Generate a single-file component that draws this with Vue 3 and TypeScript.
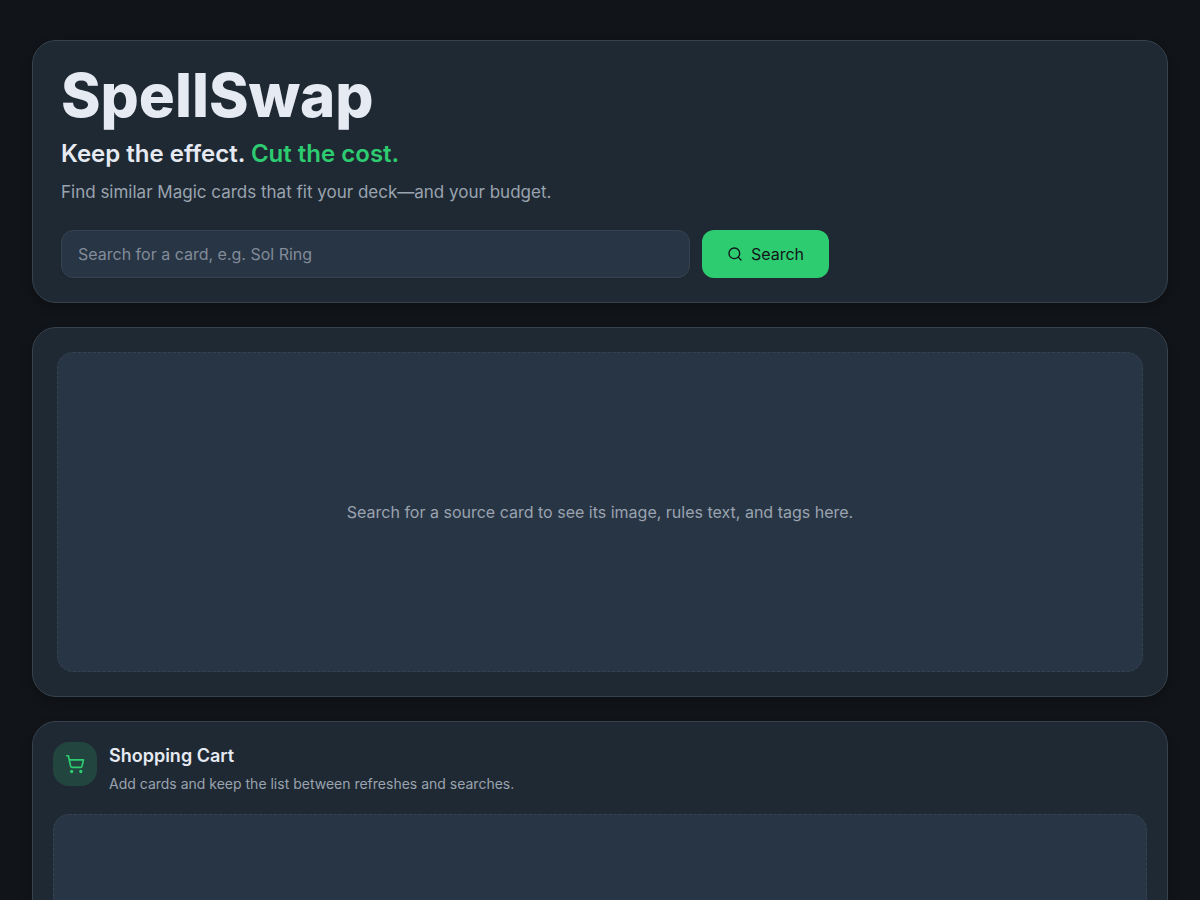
<script setup lang="ts">
import { ref } from 'vue'

const query = ref<string>('')
const cartItems = ref<string[]>([])
</script>

<template>
  <main class="page">
    <header class="panel hero">
      <h1 class="title">SpellSwap</h1>
      <p class="tagline">Keep the effect. <span class="accent">Cut the cost.</span></p>
      <p class="lead">Find similar Magic cards that fit your deck—and your budget.</p>
      <form class="search" role="search" @submit.prevent>
        <input
          v-model="query"
          class="field"
          type="text"
          aria-label="Card name"
          placeholder="Search for a card, e.g. Sol Ring"
        />
        <button class="submit" type="submit">
          <svg class="submit-icon" viewBox="0 0 24 24" aria-hidden="true">
            <circle cx="11" cy="11" r="8" />
            <path d="m21 21-4.3-4.3" />
          </svg>
          Search
        </button>
      </form>
    </header>

    <section class="panel source">
      <div class="empty source-empty">
        <p>Search for a source card to see its image, rules text, and tags here.</p>
      </div>
    </section>

    <section class="panel cart">
      <div class="cart-head">
        <span class="badge">
          <svg class="badge-icon" viewBox="0 0 24 24" aria-hidden="true">
            <circle cx="8" cy="21" r="1" />
            <circle cx="19" cy="21" r="1" />
            <path d="M2.05 2.05h2l2.66 12.42a2 2 0 0 0 2 1.58h9.78a2 2 0 0 0 1.95-1.57l1.65-7.43H5.12" />
          </svg>
        </span>
        <div>
          <h2 class="cart-title">Shopping Cart</h2>
          <p class="cart-note">Add cards and keep the list between refreshes and searches.</p>
        </div>
      </div>
      <div v-if="cartItems.length === 0" class="empty cart-empty"></div>
    </section>
  </main>
</template>

<style>
html,
body {
  background: #111418;
}
</style>

<style scoped>
.page {
  display: flex;
  flex-direction: column;
  gap: 24px;
  box-sizing: border-box;
  max-width: 1280px;
  margin: 0 auto;
  padding: 40px 32px;
  color: #e6eaf2;
  font-family: Inter, "Liberation Sans", sans-serif;
  font-size: 16px;
  line-height: 24px;
}

h1,
h2,
p {
  margin: 0;
}

.panel {
  border: 1px solid #36424f;
  border-radius: 24px;
  background: #1f2933;
  box-shadow: 0 4px 12px rgba(0, 0, 0, 0.2);
}

.hero {
  padding: 24px 28px;
}

.title {
  font-size: 60px;
  line-height: 61px;
  font-weight: 800;
}

.tagline {
  margin-top: 12px;
  font-size: 24px;
  line-height: 32px;
  font-weight: 600;
}

.accent {
  color: #2ecc71;
}

.lead {
  margin-top: 8px;
  color: #9aa3af;
  font-size: 17px;
  line-height: 28px;
}

.search {
  display: flex;
  gap: 12px;
  max-width: 768px;
  margin-top: 24px;
}

.field {
  flex: 1;
  min-width: 0;
  box-sizing: border-box;
  height: 48px;
  padding: 0 16px;
  border: 1px solid #36424f;
  border-radius: 12px;
  outline: none;
  background: #283545;
  box-shadow: 0 1px 2px rgba(0, 0, 0, 0.1);
  color: inherit;
  font: inherit;
}

.field::placeholder {
  color: #828c99;
  opacity: 1;
}

.submit {
  display: inline-flex;
  align-items: center;
  gap: 8px;
  height: 48px;
  padding: 0 25px;
  border: 0;
  border-radius: 12px;
  background: #2ecc71;
  color: #111418;
  font: inherit;
  cursor: pointer;
}

.submit-icon,
.badge-icon {
  fill: none;
  stroke: currentColor;
  stroke-width: 2;
  stroke-linecap: round;
  stroke-linejoin: round;
}

.submit-icon {
  width: 16px;
  height: 16px;
}

.empty {
  display: flex;
  align-items: center;
  justify-content: center;
  box-sizing: border-box;
  border: 1px dashed #36424f;
  border-radius: 16px;
  background: #283545;
  color: #9aa3af;
  text-align: center;
}

.source {
  padding: 24px;
}

.source-empty {
  min-height: 320px;
}

.cart {
  padding: 20px;
}

.cart-head {
  display: flex;
  gap: 12px;
}

.badge {
  display: flex;
  flex: none;
  align-items: center;
  justify-content: center;
  width: 44px;
  height: 44px;
  border-radius: 16px;
  background: #22463f;
  color: #2ecc71;
}

.badge-icon {
  width: 20px;
  height: 20px;
}

.cart-title {
  font-size: 18px;
  line-height: 28px;
  font-weight: 600;
}

.cart-note {
  margin-top: 4px;
  color: #9aa3af;
  font-size: 14px;
  line-height: 20px;
}

.cart-empty {
  min-height: 160px;
  margin-top: 20px;
}
</style>
